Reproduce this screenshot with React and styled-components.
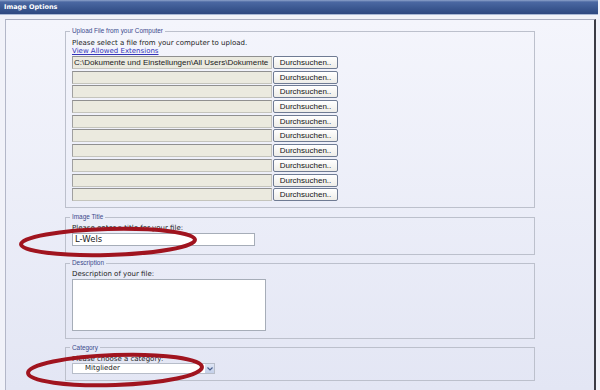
import React from 'react';
import styled, { createGlobalStyle } from 'styled-components';

const GlobalStyle = createGlobalStyle`
  html, body {
    margin: 0;
    padding: 0;
    background: #f4f5fb;
  }
  body {
    font-family: "DejaVu Sans", Verdana, sans-serif;
  }
`;

const Screen = styled.div`
  position: relative;
  width: 600px;
  height: 390px;
  overflow: hidden;
  background: #f1f2f9;
`;

const TitleBar = styled.div`
  box-sizing: border-box;
  width: 598px;
  height: 15px;
  padding-left: 4px;
  background: linear-gradient(#8ea3cb 0, #4b68a2 2px, #3c5992 55%, #2e4880 100%);
  border-bottom: 1px solid #a9b8d4;
  color: #fff;
  font: bold 6.5px/14px "DejaVu Sans", Verdana, sans-serif;
`;

const Panel = styled.div`
  box-sizing: border-box;
  margin: 4px 0 0 5px;
  width: 591px;
  height: 371px;
  padding: 7px 0 0 59px;
  border-top: 1px solid #a9adbf;
  border-left: 1px solid #b3b7c8;
  border-right: 2px solid #3b3b44;
  background: linear-gradient(#f4f5fc, #e3e6f4);
`;

const Group = styled.fieldset`
  box-sizing: border-box;
  width: 470px;
  min-inline-size: 0;
  margin: ${p => p.$gap}px 0 0;
  padding: ${p => p.$top}px 6px ${p => p.$bottom}px;
  border: 1px solid #bcc0cc;
`;

const Caption = styled.legend`
  margin-left: -2px;
  padding: 0 2px;
  font: 6.4px/8px "Liberation Sans", Arial, sans-serif;
  color: #3b4a8c;
`;

const Label = styled.div`
  font: 7px/7.5px "DejaVu Sans", Verdana, sans-serif;
  color: #1c1c1c;
  white-space: nowrap;
`;

const ExtLink = styled.a`
  display: block;
  font: 7px/7.5px "DejaVu Sans", Verdana, sans-serif;
  color: #3434b8;
  text-decoration: underline;
`;

const FileList = styled.div`
  display: grid;
  row-gap: 1.7px;
  margin-top: 1px;
`;

const FileRow = styled.div`
  display: flex;
  gap: 1px;
  height: 13px;
`;

const FilePath = styled.div`
  box-sizing: border-box;
  width: 200px;
  height: 13px;
  padding-left: 1px;
  overflow: hidden;
  white-space: nowrap;
  background: #ebeadf;
  border: 1px solid #c4c4bc;
  border-top-color: #909090;
  border-left-color: #a0a0a0;
  color: #222;
  font: 8px/11px "Liberation Sans", Arial, sans-serif;
`;

const Browse = styled.button`
  box-sizing: border-box;
  width: 65px;
  height: 13px;
  padding: 0;
  background: linear-gradient(#ffffff, #eeede8);
  border: 1px solid #6f7b93;
  border-radius: 2px;
  color: #151515;
  font: 8px/11px "Liberation Sans", Arial, sans-serif;
`;

const TextBox = styled.div`
  box-sizing: border-box;
  width: 183px;
  height: 13px;
  padding-left: 2px;
  background: #fff;
  border: 1px solid #a6adb8;
  color: #222;
  font: 8.5px/11px "DejaVu Sans", Verdana, sans-serif;
`;

const TextArea = styled.textarea`
  display: block;
  box-sizing: border-box;
  width: 194px;
  height: 52px;
  margin: 0;
  resize: none;
  background: #fff;
  border: 1px solid #a6adb8;
`;

const Select = styled.div`
  box-sizing: border-box;
  display: flex;
  width: 143px;
  height: 11px;
  background: #fff;
  border: 1px solid #b7bdc9;
`;

const SelectValue = styled.div`
  flex: 1;
  padding-left: 12px;
  color: #1c1c1c;
  font: 7px/9px "DejaVu Sans", Verdana, sans-serif;
`;

const SelectArrow = styled.div`
  display: flex;
  align-items: center;
  justify-content: center;
  width: 9px;
  background: linear-gradient(#dfe6f5, #c3cfe9);
`;

const Marks = styled.svg`
  position: absolute;
  left: 0;
  top: 0;
  pointer-events: none;
`;

const files = Array.from({ length: 10 }, (_, i) =>
  i === 0 ? 'C:\\Dokumente und Einstellungen\\All Users\\Dokumente' : ''
);

export default function App() {
  return (
    <Screen>
      <GlobalStyle />
      <TitleBar>Image Options</TitleBar>
      <Panel>
        <Group $gap={0} $top={5} $bottom={6}>
          <Caption>Upload File from your Computer</Caption>
          <Label>Please select a file from your computer to upload.</Label>
          <ExtLink href="#">View Allowed Extensions</ExtLink>
          <FileList>
            {files.map((f, i) => (
              <FileRow key={i}>
                <FilePath>{f}</FilePath>
                <Browse>Durchsuchen..</Browse>
              </FileRow>
            ))}
          </FileList>
        </Group>

        <Group $gap={5} $top={4} $bottom={8}>
          <Caption>Image Title</Caption>
          <Label>Please enter a title for your file:</Label>
          <TextBox>L-Wels</TextBox>
        </Group>

        <Group $gap={4.5} $top={4} $bottom={7}>
          <Caption>Description</Caption>
          <Label>Description of your file:</Label>
          <TextArea />
        </Group>

        <Group $gap={5} $top={4} $bottom={6}>
          <Caption>Category</Caption>
          <Label>Please choose a category:</Label>
          <Select>
            <SelectValue>Mitglieder</SelectValue>
            <SelectArrow>
              <svg width="6" height="4" viewBox="0 0 6 4">
                <path d="M0.5 0.5 L3 3 L5.5 0.5" fill="none" stroke="#4a5f8c" strokeWidth="1.2" />
              </svg>
            </SelectArrow>
          </Select>
        </Group>
      </Panel>

      <Marks width="600" height="390" viewBox="0 0 600 390">
        <ellipse cx="108" cy="242" rx="87" ry="13" fill="none" stroke="#a0141f" strokeWidth="4" transform="rotate(-1.5 108 242)" />
        <ellipse cx="115" cy="370" rx="87" ry="15" fill="none" stroke="#a0141f" strokeWidth="4" transform="rotate(-2 115 370)" />
      </Marks>
    </Screen>
  );
}
